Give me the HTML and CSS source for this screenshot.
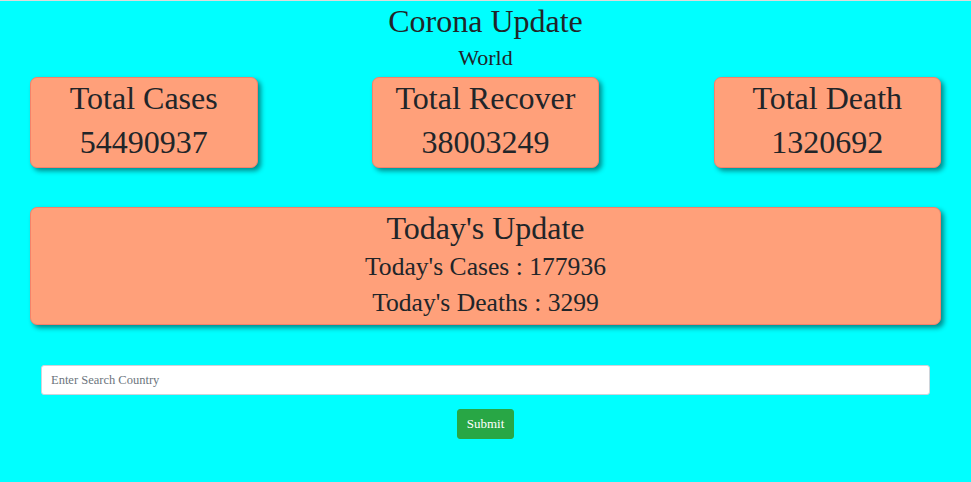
FILE: index.html
```html
<!DOCTYPE html>
<html lang="en">
<head>
<meta charset="utf-8">
<title>Corona Update</title>
<link rel="stylesheet" href="styles.css">
</head>
<body>
<div class="page">
  <h1 class="title">Corona Update</h1>
  <h3 class="subtitle">World</h3>
  <div class="stats">
    <div class="card">
      <h2 class="card-line">Total Cases</h2>
      <h2 class="card-line">54490937</h2>
    </div>
    <div class="card">
      <h2 class="card-line">Total Recover</h2>
      <h2 class="card-line">38003249</h2>
    </div>
    <div class="card">
      <h2 class="card-line">Total Death</h2>
      <h2 class="card-line">1320692</h2>
    </div>
  </div>
  <div class="card today">
    <h2 class="card-line">Today's Update</h2>
    <h4 class="today-line">Today's Cases : 177936</h4>
    <h4 class="today-line">Today's Deaths : 3299</h4>
  </div>
  <form class="search">
    <input class="search-input" type="text" placeholder="Enter Search Country">
    <button class="submit" type="button">Submit</button>
  </form>
</div>
</body>
</html>
```
FILE: styles.css
```css
html, body {
  margin: 0;
  padding: 0;
}
body {
  background: #00ffff;
  font-family: "Liberation Serif", "Times New Roman", serif;
  color: #212529;
  border-top: 1px solid #dcdcdc;
}
.page {
  padding: 0 30px;
  text-align: center;
}
.title {
  margin: 1px 0 0;
  font-size: 32px;
  font-weight: normal;
  line-height: 38px;
}
.subtitle {
  margin: 4px 0 0;
  font-size: 22px;
  font-weight: normal;
  line-height: 27px;
}
.stats {
  display: flex;
  justify-content: space-between;
  margin-top: 6px;
}
.card {
  background: #ffa07a;
  border: 1px solid #f5816a;
  border-radius: 7px;
  box-shadow: 3px 3px 5px rgba(0, 0, 0, 0.45);
  padding: 1px 0 6px;
  box-sizing: border-box;
}
.stats .card {
  width: 227.5px;
}
.card-line {
  margin: 0;
  font-size: 32px;
  font-weight: normal;
  line-height: 38px;
}
.card-line + .card-line {
  margin-top: 6px;
}
.today {
  margin-top: 39px;
  padding-bottom: 3px;
}
.today-line {
  margin: 0;
  font-size: 25.6px;
  font-weight: normal;
  line-height: 36px;
}
.card-line + .today-line {
  margin-top: 2px;
}
.search {
  display: flex;
  flex-direction: column;
  align-items: center;
  gap: 14px;
  margin: 40px 11px 0;
}
.search-input {
  align-self: stretch;
  height: 30px;
  box-sizing: border-box;
  border: 1px solid #ced4da;
  border-radius: 3px;
  padding: 0 9px;
  font-family: "Liberation Serif", "Times New Roman", serif;
  font-size: 12.5px;
  color: #495057;
  background: #fff;
}
.search-input::placeholder {
  color: #6c757d;
}
.submit {
  background: #28a745;
  border: 1px solid #28a745;
  border-radius: 3px;
  color: #fff;
  font-family: "Liberation Serif", "Times New Roman", serif;
  font-size: 13px;
  font-weight: normal;
  height: 30px;
  padding: 0 9px;
  cursor: pointer;
}
```
